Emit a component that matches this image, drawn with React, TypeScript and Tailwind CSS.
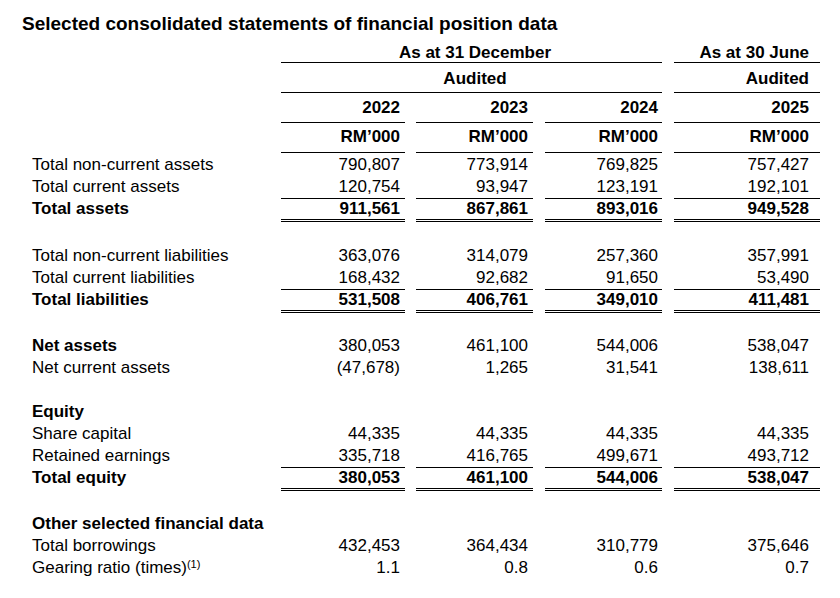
type Kind = "row" | "strong" | "heading" | "total" | "blank";

type Line = {
  kind: Kind;
  label?: string;
  values?: string[];
  note?: string;
  tall?: boolean;
};

// column boxes: width, gap before, right padding for the figures
const cols = [
  { w: "w-[124px]", ml: "", pr: "pr-[5px]" },
  { w: "w-[117px]", ml: "ml-[11px]", pr: "pr-[5px]" },
  { w: "w-[117px]", ml: "ml-[12px]", pr: "pr-[4px]" },
  { w: "w-[146px]", ml: "ml-[12px]", pr: "pr-[11px]" },
];

const lines: Line[] = [
  { kind: "row", label: "Total non-current assets", values: ["790,807", "773,914", "769,825", "757,427"] },
  { kind: "row", label: "Total current assets", values: ["120,754", "93,947", "123,191", "192,101"] },
  { kind: "total", label: "Total assets", values: ["911,561", "867,861", "893,016", "949,528"] },
  { kind: "blank", tall: true },
  { kind: "row", label: "Total non-current liabilities", values: ["363,076", "314,079", "257,360", "357,991"] },
  { kind: "row", label: "Total current liabilities", values: ["168,432", "92,682", "91,650", "53,490"] },
  { kind: "total", label: "Total liabilities", values: ["531,508", "406,761", "349,010", "411,481"] },
  { kind: "blank" },
  { kind: "strong", label: "Net assets", values: ["380,053", "461,100", "544,006", "538,047"] },
  { kind: "row", label: "Net current assets", values: ["(47,678)", "1,265", "31,541", "138,611"] },
  { kind: "blank" },
  { kind: "heading", label: "Equity" },
  { kind: "row", label: "Share capital", values: ["44,335", "44,335", "44,335", "44,335"] },
  { kind: "row", label: "Retained earnings", values: ["335,718", "416,765", "499,671", "493,712"] },
  { kind: "total", label: "Total equity", values: ["380,053", "461,100", "544,006", "538,047"] },
  { kind: "blank" },
  { kind: "heading", label: "Other selected financial data" },
  { kind: "row", label: "Total borrowings", values: ["432,453", "364,434", "310,779", "375,646"] },
  { kind: "row", label: "Gearing ratio (times)", note: "(1)", values: ["1.1", "0.8", "0.6", "0.7"] },
];

function BodyRow({ line }: { line: Line }) {
  if (line.kind === "blank") return <div className={line.tall ? "h-[23px]" : "h-[22px]"} />;

  if (line.kind === "total") {
    return (
      <div className="flex">
        <div className="w-[281px] pl-[32px] pt-[1px] pb-[3px] leading-[20px] font-bold">{line.label}</div>
        {cols.map((c, i) => (
          <div
            key={i}
            className={`${c.w} ${c.ml} ${c.pr} text-right font-bold leading-[20px] border-double border-black border-t border-b-[3px]`}
          >
            {line.values?.[i]}
          </div>
        ))}
      </div>
    );
  }

  const bold = line.kind === "strong" || line.kind === "heading";
  return (
    <div className="flex h-[22px] leading-[22px]">
      <div className={`w-[281px] pl-[32px] ${bold ? "font-bold" : ""}`}>
        {line.label}
        {line.note && <sup className="text-[11px]">{line.note}</sup>}
      </div>
      {cols.map((c, i) => (
        <div key={i} className={`${c.w} ${c.ml} ${c.pr} text-right`}>
          {line.values?.[i]}
        </div>
      ))}
    </div>
  );
}

export default function App() {
  return (
    <div className="w-[840px] h-[598px] bg-white text-black font-['Liberation_Sans',Arial,sans-serif] text-[17px] overflow-hidden">
      <h1 className="pl-[22px] pt-[12px] text-[19px] leading-[24px] font-bold">
        Selected consolidated statements of financial position data
      </h1>

      {/* Period headers */}
      <div className="flex font-bold">
        <div className="w-[281px]" />
        <div className="w-[381px] flex flex-col">
          <div className="h-[27px] flex items-end justify-center pl-[7px] leading-[19px] border-b border-black">
            As at 31 December
          </div>
          <div className="h-[30px] flex items-end justify-center pl-[7px] pb-[2px] leading-[22px] border-b border-black">
            Audited
          </div>
        </div>
        <div className="w-[146px] ml-[12px] flex flex-col">
          <div className="h-[27px] flex items-end justify-end pr-[11px] leading-[19px] border-b border-black">
            As at 30 June
          </div>
          <div className="h-[30px] flex items-end justify-end pr-[11px] pb-[2px] leading-[22px] border-b border-black">
            Audited
          </div>
        </div>
      </div>

      {/* Year and unit rows */}
      {[
        { text: ["2022", "2023", "2024", "2025"], pb: "pb-[3px]" },
        { text: ["RM’000", "RM’000", "RM’000", "RM’000"], pb: "pb-[4px]" },
      ].map((r, j) => (
        <div key={j} className="flex font-bold">
          <div className="w-[281px]" />
          {cols.map((c, i) => (
            <div
              key={i}
              className={`${c.w} ${c.ml} ${c.pr} ${r.pb} h-[30px] flex items-end justify-end leading-[22px] border-b border-black`}
            >
              {r.text[i]}
            </div>
          ))}
        </div>
      ))}

      <div className="mt-[1px]">
        {lines.map((line, i) => (
          <BodyRow key={i} line={line} />
        ))}
      </div>
    </div>
  );
}
